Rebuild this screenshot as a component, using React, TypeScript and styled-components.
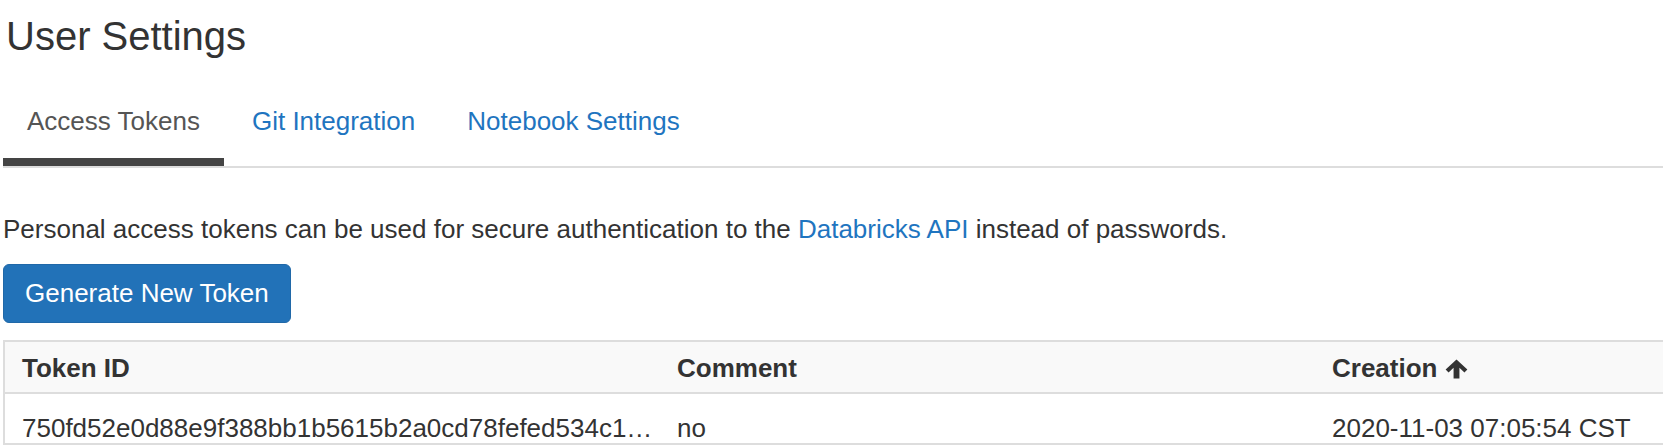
import React from "react";
import styled, { createGlobalStyle } from "styled-components";

const GlobalStyle = createGlobalStyle`
  html, body {
    margin: 0;
    padding: 0;
    overflow: hidden;
    background: #ffffff;
  }
  body {
    font-family: "Liberation Sans", Arial, sans-serif;
    color: #333333;
  }
`;

const Page = styled.div`
  padding: 14px 0 0 3px;
  width: 1660px;
`;

const Title = styled.h1`
  margin: 0 0 0 3px;
  font-size: 40px;
  font-weight: 400;
  line-height: 44px;
  color: #333333;
`;

const Tabs = styled.nav`
  margin-top: 26px;
  display: flex;
  gap: 4px;
  border-bottom: 2px solid #dddddd;
`;

const Tab = styled.a<{ $active?: boolean }>`
  display: block;
  padding: 22px 24px 22px 24px;
  font-size: 26px;
  line-height: 30px;
  text-decoration: none;
  cursor: pointer;
  color: ${(p) => (p.$active ? "#555555" : "#1f75c0")};
  border-bottom: 8px solid ${(p) => (p.$active ? "#444444" : "transparent")};
`;

const Intro = styled.p`
  margin: 43px 0 0 0;
  font-size: 26px;
  line-height: 37px;
  color: #333333;
`;

const Link = styled.a`
  color: #1f75c0;
  text-decoration: none;
`;

const PrimaryButton = styled.button`
  margin-top: 16px;
  height: 59px;
  padding: 0 21px 3px;
  font-family: "Liberation Sans", Arial, sans-serif;
  font-size: 26px;
  line-height: 56px;
  color: #ffffff;
  background: #2272b8;
  border: 1px solid #2068a8;
  border-radius: 6px;
  cursor: pointer;
  display: block;
`;

const TokenTable = styled.table`
  margin-top: 17px;
  width: 1969px;
  table-layout: fixed;
  border-collapse: collapse;
  border: 2px solid #dddddd;
`;

const HeadCell = styled.th`
  text-align: left;
  font-size: 26px;
  font-weight: 700;
  line-height: 25px;
  padding: 14px 17px 11px;
  background: #f9f9f9;
  color: #333333;
  border-bottom: 2px solid #dddddd;
  white-space: nowrap;
`;

const HeadInner = styled.span`
  display: inline-flex;
  align-items: center;
  gap: 8px;
`;

const Cell = styled.td`
  font-size: 26px;
  line-height: 25px;
  padding: 22px 17px 2px;
  color: #333333;
  border-bottom: 2px solid #dddddd;
  white-space: nowrap;
  overflow: hidden;
`;

const SortArrow = () => (
  <svg width="23" height="20" viewBox="0 0 22 19" aria-hidden="true">
    <path
      d="M11 0.3 L21.4 10 L18.6 12.8 L13.8 8.2 V18.7 H8.2 V8.2 L3.4 12.8 L0.6 10 Z"
      fill="#333333"
    />
  </svg>
);

export default function App() {
  return (
    <>
      <GlobalStyle />
      <Page>
        <Title>User Settings</Title>
        <Tabs>
          <Tab $active>Access Tokens</Tab>
          <Tab>Git Integration</Tab>
          <Tab>Notebook Settings</Tab>
        </Tabs>
        <Intro>
          Personal access tokens can be used for secure authentication to the{" "}
          <Link>Databricks API</Link> instead of passwords.
        </Intro>
        <PrimaryButton>Generate New Token</PrimaryButton>
        <TokenTable>
          <colgroup>
            <col style={{ width: 656 }} />
            <col style={{ width: 655 }} />
            <col style={{ width: 656 }} />
          </colgroup>
          <thead>
            <tr>
              <HeadCell>Token ID</HeadCell>
              <HeadCell>Comment</HeadCell>
              <HeadCell>
                <HeadInner>
                  Creation
                  <SortArrow />
                </HeadInner>
              </HeadCell>
            </tr>
          </thead>
          <tbody>
            <tr>
              <Cell>750fd52e0d88e9f388bb1b5615b2a0cd78fefed534c1…</Cell>
              <Cell>no</Cell>
              <Cell>2020-11-03 07:05:54 CST</Cell>
            </tr>
          </tbody>
        </TokenTable>
      </Page>
    </>
  );
}
